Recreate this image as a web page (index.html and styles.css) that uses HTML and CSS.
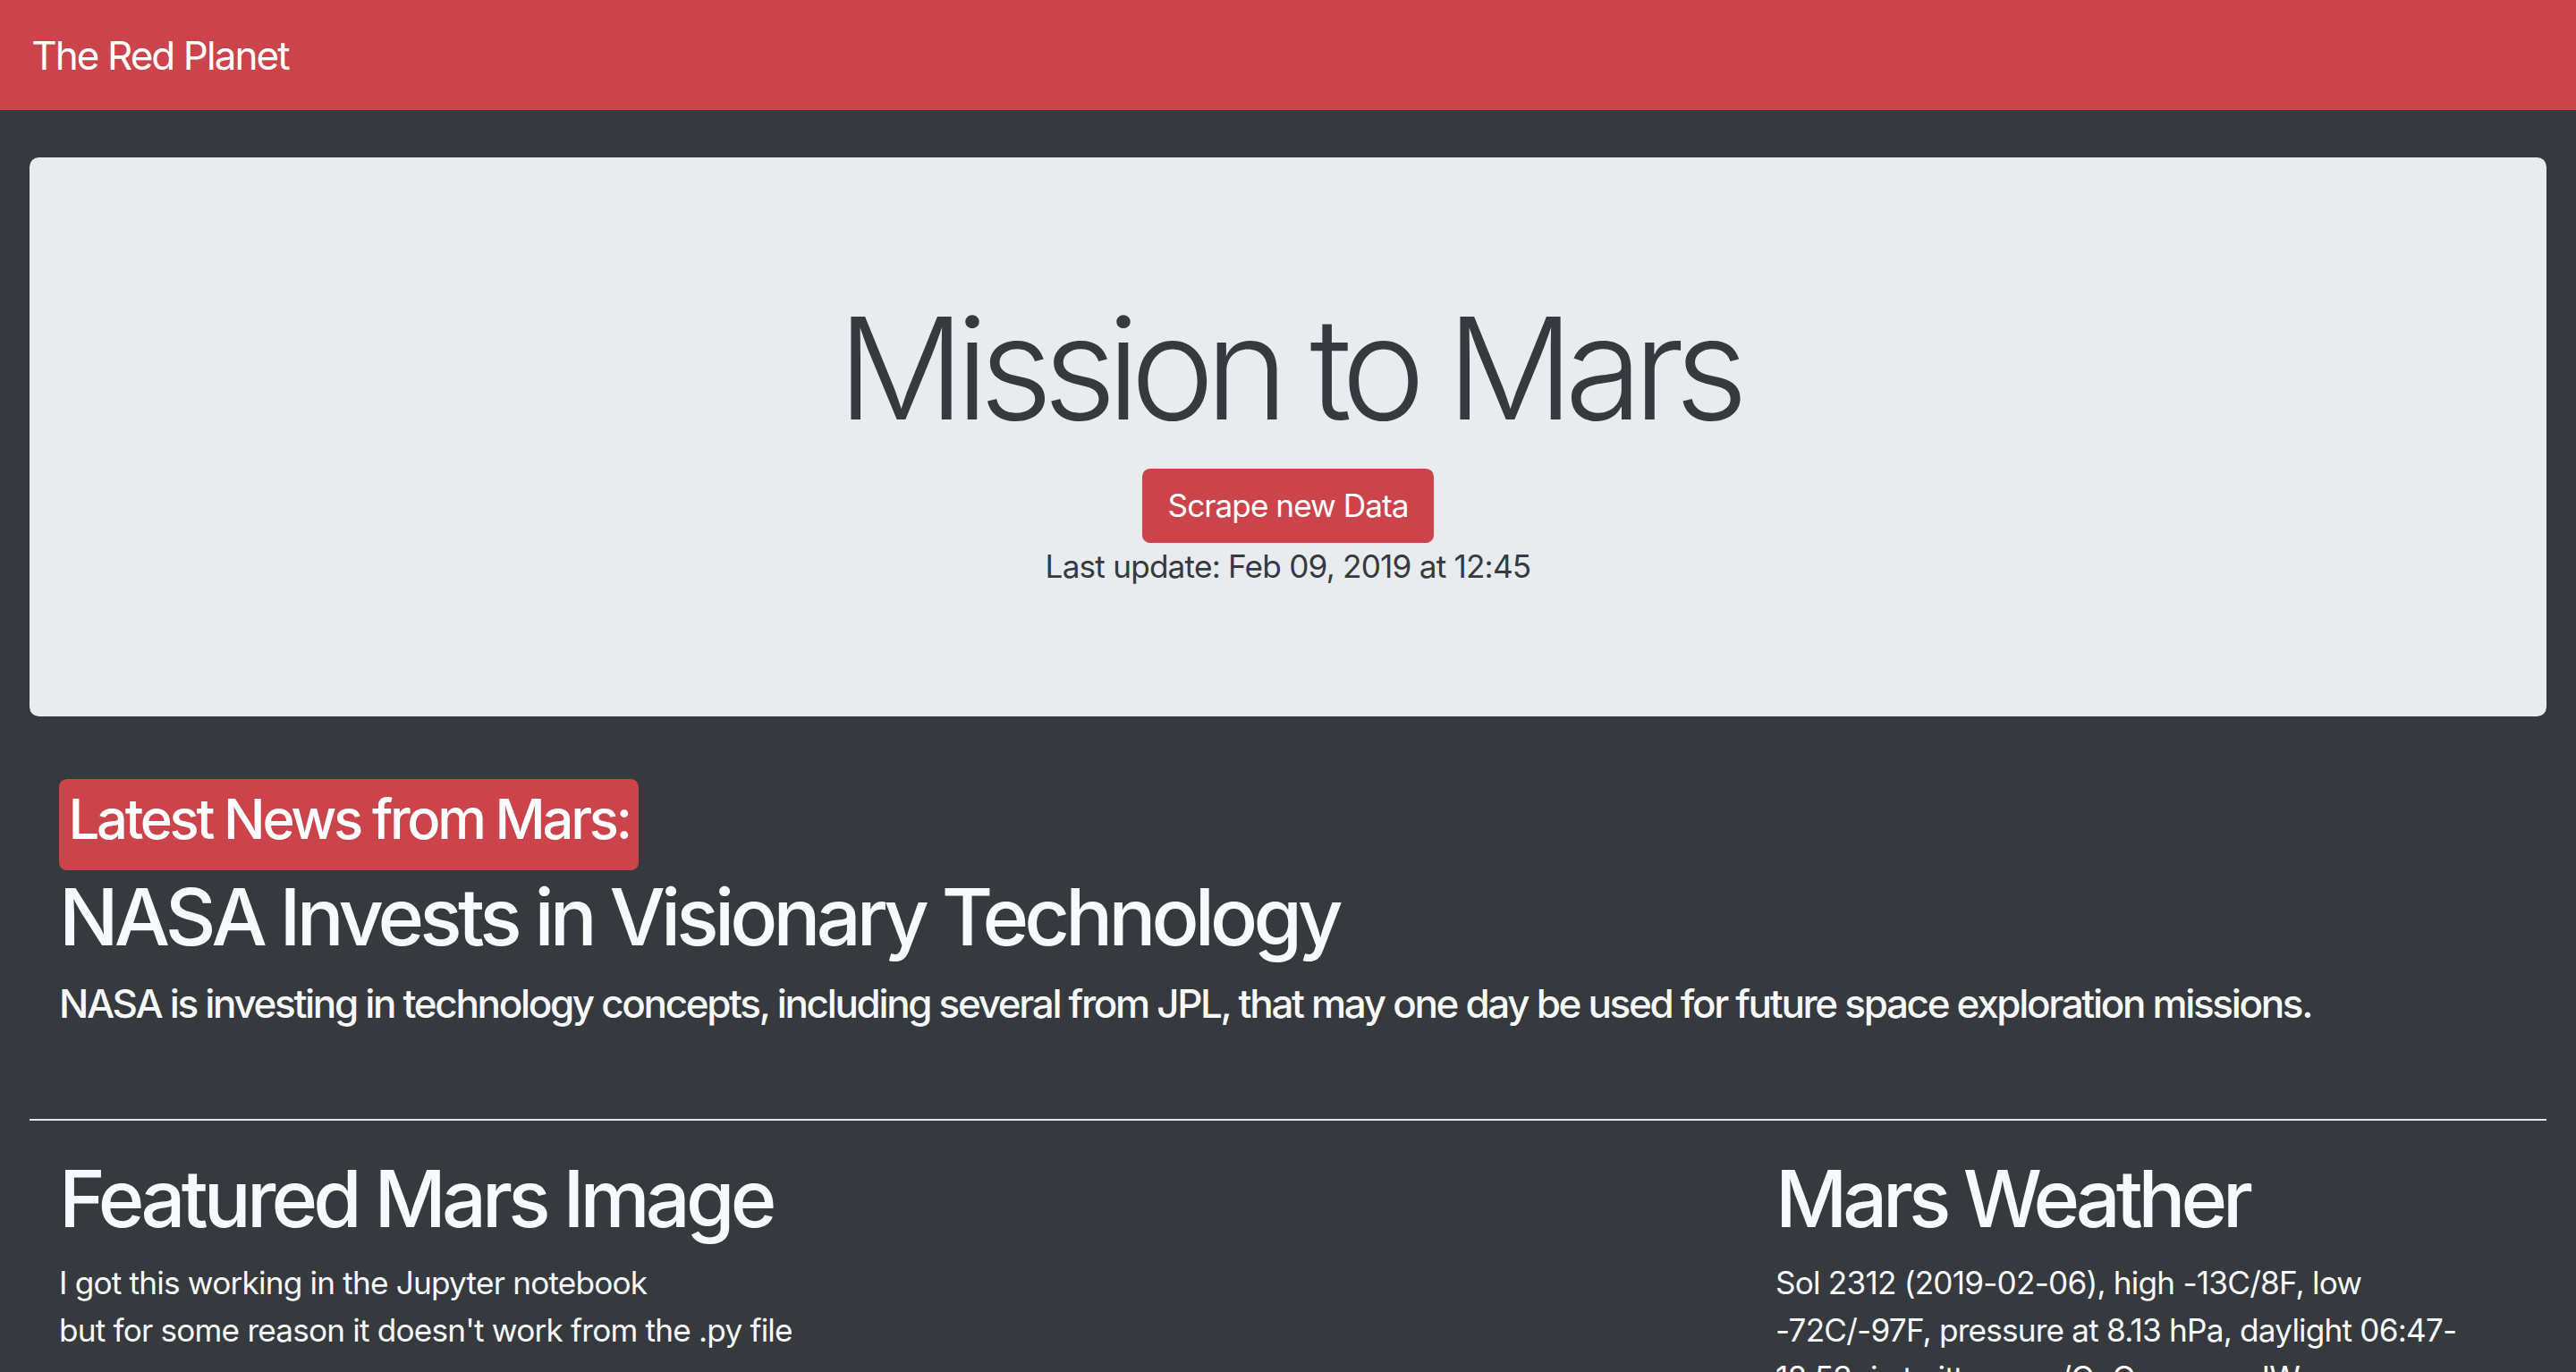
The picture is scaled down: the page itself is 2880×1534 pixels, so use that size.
FILE: index.html
```html
<!DOCTYPE html>
<html lang="en">
<head>
<meta charset="utf-8">
<title>Mission to Mars</title>
<link rel="stylesheet" href="styles.css">
</head>
<body>
<nav class="navbar">
  <a class="brand" href="#">The Red Planet</a>
</nav>
<div class="page">
  <div class="jumbotron">
    <h1 class="display">Mission to Mars</h1>
    <a class="btn" href="#">Scrape new Data</a>
    <p class="update">Last update: Feb 09, 2019 at 12:45</p>
  </div>
  <section class="news">
    <div class="tag">Latest News from Mars:</div>
    <h1 class="title">NASA Invests in Visionary Technology</h1>
    <h5 class="teaser">NASA is investing in technology concepts, including several from JPL, that may one day be used for future space exploration missions.</h5>
  </section>
  <hr class="rule">
  <div class="cols">
    <div class="col">
      <h1 class="title">Featured Mars Image</h1>
      <p class="body">I got this working in the Jupyter notebook<br>but for some reason it doesn't work from the .py file</p>
    </div>
    <div class="col">
      <h1 class="title">Mars Weather</h1>
      <p class="body">Sol 2312 (2019-02-06), high -13C/8F, low -72C/-97F, pressure at 8.13 hPa, daylight 06:47-18:53pic.twitter.com/QnOomommJW</p>
    </div>
  </div>
</div>
</body>
</html>
```
FILE: styles.css
```css
html, body {
  margin: 0;
  padding: 0;
}
body {
  background: #363a3f;
  font-family: Inter, "Noto Sans", sans-serif;
  font-size: 35.2px;
  line-height: 52.8px;
  letter-spacing: -0.023em;
  color: #f8f9fa;
  overflow: hidden;
}
.navbar {
  background: #cc444b;
  padding: 17.6px 35.2px;
}
.brand {
  display: inline-block;
  color: #ffffff;
  text-decoration: none;
  font-size: 44px;
  line-height: 66px;
  letter-spacing: -0.044em;
  padding: 11px 0;
}
.page {
  padding: 0 33px;
  margin-top: 52.8px;
}
.jumbotron {
  background: #e8ecef;
  border-radius: 10.5px;
  padding: 140.8px 70.4px;
  margin-bottom: 70.4px;
  display: flex;
  flex-direction: column;
  align-items: center;
  color: #363a3f;
}
.display {
  font-size: 158.4px;
  font-weight: 300;
  line-height: 1.2;
  letter-spacing: -0.066em;
  margin: 0 0 17.6px;
}
.btn {
  display: block;
  background: #cc444b;
  color: #ffffff;
  text-decoration: none;
  border: 2px solid #cc444b;
  border-radius: 8.8px;
  padding: 13px 26.4px;
  font-size: 35.2px;
  line-height: 52.8px;
  letter-spacing: -0.028em;
}
.update {
  margin: 0;
}
.news {
  padding: 0 33px;
}
.tag {
  display: inline-block;
  background: #cc444b;
  color: #ffffff;
  border-radius: 8.8px;
  font-size: 61.6px;
  font-weight: 500;
  line-height: 74px;
  letter-spacing: -0.054em;
  padding: 8px 10.5px 20px;
}
.title {
  font-size: 88px;
  font-weight: 500;
  line-height: 1.2;
  letter-spacing: -0.055em;
  margin: 0 0 17.6px;
  color: #f8f9fa;
}
.teaser {
  font-size: 44px;
  font-weight: 500;
  line-height: 1.2;
  letter-spacing: -0.053em;
  margin: 0;
  color: #f8f9fa;
}
.rule {
  border: 0;
  height: 2px;
  background: #e4e7ea;
  margin: 102px 0 35.2px;
}
.cols {
  display: grid;
  grid-template-columns: 1fr 829px;
  padding: 0 33px;
  column-gap: 98px;
}
.col .title {
  margin-bottom: 14px;
}
.col:last-child .title {
  letter-spacing: -0.058em;
}
.body {
  margin: 0;
  color: #f8f9fa;
}
```
